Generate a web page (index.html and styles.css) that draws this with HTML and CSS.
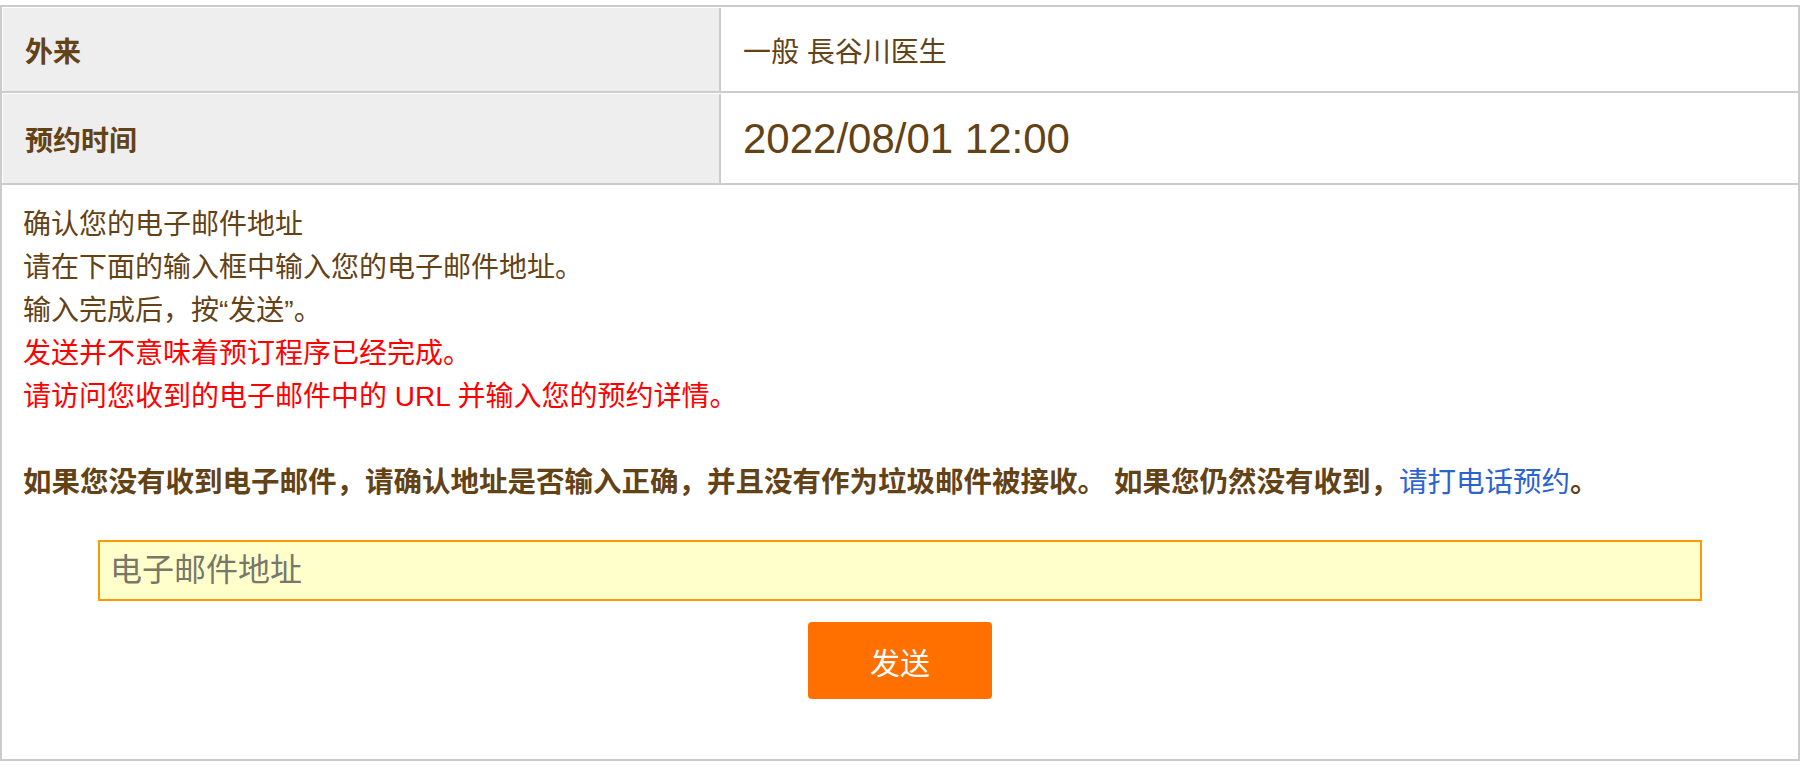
FILE: index.html
```html
<!DOCTYPE html>
<html lang="zh-CN">
<head>
<meta charset="utf-8">
<title>确认电子邮件地址</title>
<link rel="stylesheet" href="styles.css">
</head>
<body>
<div class="panel">
  <div class="row row-first">
    <div class="th">外来</div>
    <div class="td">一般 長谷川医生</div>
  </div>
  <div class="row row-second">
    <div class="th">预约时间</div>
    <div class="td date">2022/08/01 12:00</div>
  </div>
  <div class="content">
    <p class="lines">
      确认您的电子邮件地址<br>
      请在下面的输入框中输入您的电子邮件地址。<br>
      输入完成后，按“发送”。<br>
      <span class="red">发送并不意味着预订程序已经完成。<br>
      请访问您收到的电子邮件中的 URL 并输入您的预约详情。</span>
    </p>
    <p class="notice">如果您没有收到电子邮件，请确认地址是否输入正确，并且没有作为垃圾邮件被接收。 如果您仍然没有收到，<a href="#" class="link">请打电话预约</a>。</p>
    <form class="form">
      <input class="email" type="email" placeholder="电子邮件地址">
      <button class="send" type="button">发送</button>
    </form>
  </div>
</div>
</body>
</html>
```

FILE: styles.css
```css
html, body {
  margin: 0;
  padding: 0;
  background: #fff;
}
body {
  padding-top: 5px;
  font-family: "Liberation Sans", "Noto Sans CJK SC", sans-serif;
  color: #634216;
}
.panel {
  width: 1800px;
  height: 756px;
  box-sizing: border-box;
  border: 2px solid #ccc;
  display: flex;
  flex-direction: column;
}
.row {
  display: flex;
  padding: 1px 0 0 1px;
  border-bottom: 2px solid #ccc;
}
.row-first .th, .row-first .td { height: 83px; }
.row-second .th, .row-second .td { height: 89px; }
.th {
  width: 716px;
  box-sizing: border-box;
  background: #eee;
  padding-left: 22px;
  display: flex;
  align-items: center;
  font-weight: bold;
  font-size: 28px;
}
.td {
  flex: 1;
  border-left: 2px solid #ccc;
  padding-left: 22px;
  display: flex;
  align-items: center;
  font-size: 28px;
}
.date {
  font-size: 42px;
}
.content {
  flex: 1;
  padding: 18px 0 0 21px;
}
.lines {
  margin: 0;
  font-size: 28px;
  line-height: 43px;
}
.red {
  color: #ff0000;
}
.notice {
  margin: 43px 0 0;
  font-size: 28.5px;
  line-height: 43px;
  font-weight: bold;
}
.link {
  color: #2b63cf;
  font-weight: normal;
  text-decoration: none;
}
.form {
  display: flex;
  flex-direction: column;
  align-items: center;
  margin: 36px 0 0 -21px;
}
.email {
  width: 1604px;
  height: 61px;
  box-sizing: border-box;
  border: 2px solid #ff9900;
  background: #ffffcc;
  padding: 0 10px;
  font-family: "Liberation Sans", "Noto Sans CJK SC", sans-serif;
  font-size: 32px;
  color: #634216;
  outline: none;
}
.email::placeholder {
  color: #77776a;
}
.send {
  margin-top: 21px;
  width: 184px;
  height: 77px;
  border: none;
  border-radius: 4px;
  background: #ff7000;
  color: #fff;
  font-family: "Liberation Sans", "Noto Sans CJK SC", sans-serif;
  font-size: 30px;
}
```
